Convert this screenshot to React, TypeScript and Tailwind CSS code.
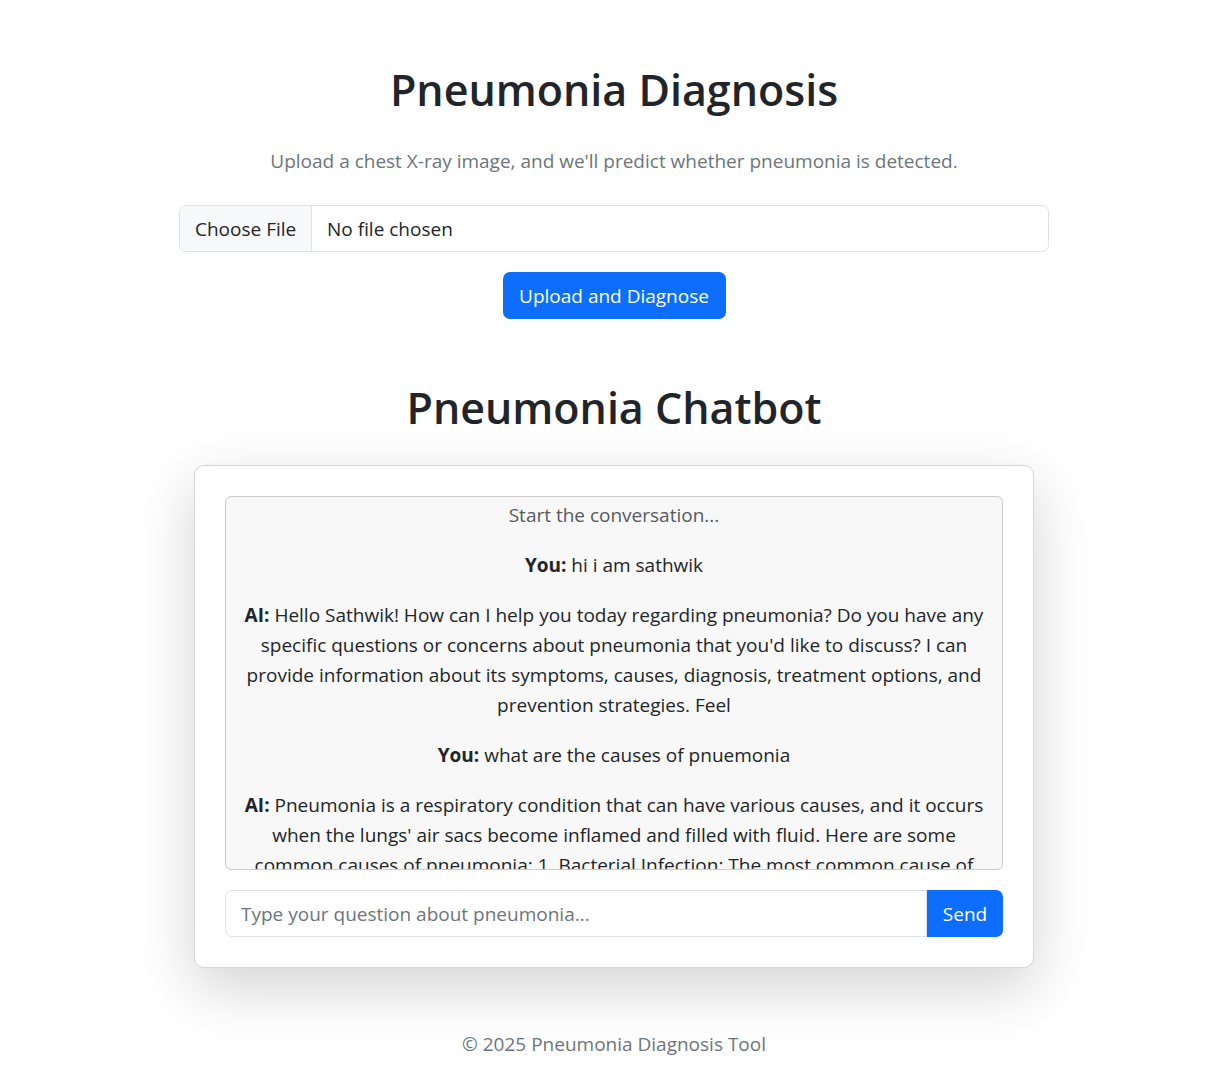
const messages = [
  { who: 'You', text: 'hi i am sathwik' },
  {
    who: 'AI',
    text: "Hello Sathwik! How can I help you today regarding pneumonia? Do you have any specific questions or concerns about pneumonia that you'd like to discuss? I can provide information about its symptoms, causes, diagnosis, treatment options, and prevention strategies. Feel",
  },
  { who: 'You', text: 'what are the causes of pnuemonia' },
  {
    who: 'AI',
    text: "Pneumonia is a respiratory condition that can have various causes, and it occurs when the lungs' air sacs become inflamed and filled with fluid. Here are some common causes of pneumonia: 1. Bacterial Infection: The most common cause of pneumonia is Streptococcus pneumoniae.",
  },
]

export default function App() {
  return (
    <div className="min-h-screen bg-white pl-[23px] font-['Open_Sans',sans-serif] text-[#212529]">
      <div className="mx-auto w-[900px] px-[15px] pt-[60px] pb-[19px]">
        <h1 className="text-center text-[43px] leading-[60px] font-semibold mb-[26px]">Pneumonia Diagnosis</h1>
        <p className="text-center text-[19px] leading-[30px] text-[#6c757d] mb-[29px]">
          Upload a chest X-ray image, and we'll predict whether pneumonia is detected.
        </p>

        <form>
          <div className="flex h-[47px] border border-[#dee2e6] rounded-[7px] overflow-hidden text-[19px]">
            <div className="flex shrink-0 items-center whitespace-nowrap bg-[#f8f9fa] px-[15px] pt-[2px] w-[132px] border-r border-[#dee2e6]">
              Choose File
            </div>
            <div className="flex items-center pl-[15px] pt-[2px]">No file chosen</div>
          </div>
          <div className="flex justify-center mt-[20px]">
            <button type="button" className="h-[47px] w-[223px] pt-[2px] bg-[#0d6efd] text-white text-[19px] rounded-[7px]">
              Upload and Diagnose
            </button>
          </div>
        </form>

        <h2 className="mt-[65px] text-center text-[43px] leading-[48px] font-semibold mb-[33px]">Pneumonia Chatbot</h2>

        <div className="mx-auto w-[840px] bg-white border border-[#d6d6d6] rounded-[10px] p-[30px] shadow-[0_20px_60px_rgba(0,0,0,0.175)]">
          <div className="h-[374px] overflow-hidden border border-[#cccccc] rounded-[6px] bg-[#f8f8f8] px-[10px] pt-[3px] text-center text-[19px] leading-[30px]">
            <p className="text-[#555b61] mb-[20px]">Start the conversation...</p>
            {messages.map((m, i) => (
              <p key={i} className="mb-[20px]">
                <strong className="font-bold">{m.who}:</strong> {m.text}
              </p>
            ))}
          </div>

          <div className="flex mt-[20px] h-[47px]">
            <input
              type="text"
              placeholder="Type your question about pneumonia..."
              className="flex-1 min-w-0 border border-[#dee2e6] rounded-l-[7px] px-[15px] pt-[2px] text-[19px] placeholder:text-[#6c757d] outline-none"
            />
            <button type="button" className="w-[76px] pt-[2px] bg-[#0d6efd] text-white text-[19px] rounded-r-[7px]">
              Send
            </button>
          </div>
        </div>

        <footer className="mt-[61px] text-center text-[19px] leading-[30px] text-[#6c757d]">
          © 2025 Pneumonia Diagnosis Tool
        </footer>
      </div>
    </div>
  )
}
